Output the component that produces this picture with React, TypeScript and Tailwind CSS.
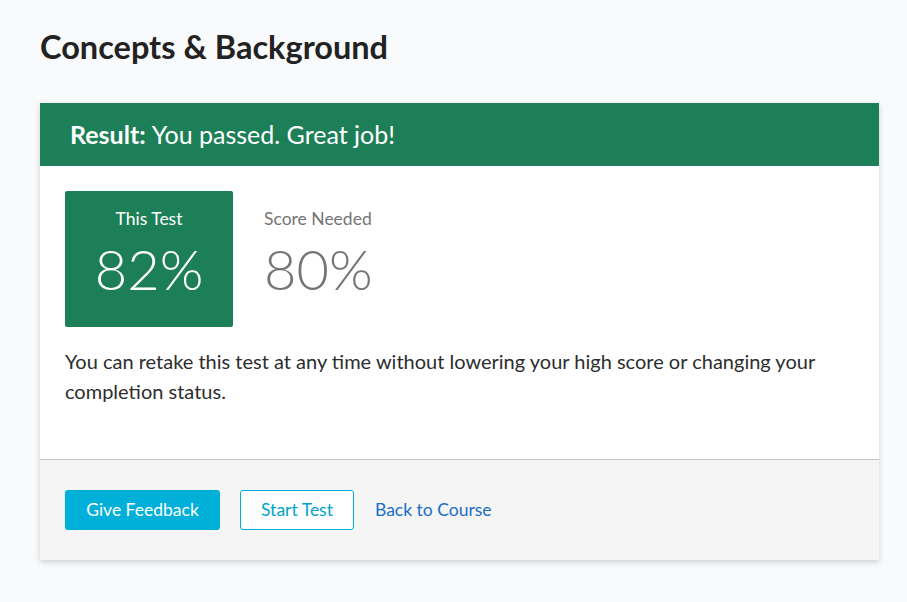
import React from 'react';

const App: React.FC = () => {
  return (
    <div className="min-h-screen w-full bg-[#f9fafc] px-10 pt-[26px] pb-10 font-['Lato','Noto_Sans',sans-serif] text-[#2d2d2d]">
      <h1 className="text-[32.5px] font-bold leading-[42px] text-[#222]">Concepts &amp; Background</h1>

      <div className="mt-[35px] w-[839px] bg-white shadow-[0_2px_6px_rgba(0,0,0,0.18)]">
        <div className="flex h-[63px] items-center bg-[#1d7f58] px-[30px] text-[25px] text-white">
          <span className="font-bold">Result:</span>
          <span className="ml-[6px]">You passed. Great job!</span>
        </div>

        <div className="px-[25px] pt-[25px] pb-[53px]">
          <div className="flex items-start">
            <div className="flex h-[136px] w-[168px] flex-col items-center rounded-[2px] bg-[#1d7f58] pt-[17px] text-white">
              <span className="text-[17.5px] leading-[22px]">This Test</span>
              <span className="mt-[8px] text-[56px] font-light leading-[62px]">82%</span>
            </div>
            <div className="ml-[31px] flex flex-col items-start pt-[17px] text-[#757575]">
              <span className="text-[17.5px] leading-[22px]">Score Needed</span>
              <span className="mt-[8px] text-[56px] font-light leading-[62px]">80%</span>
            </div>
          </div>
          <p className="mt-[19px] text-[20px] leading-[30px] text-[#2d2d2d]">
            You can retake this test at any time without lowering your high score or changing your completion status.
          </p>
        </div>

        <div className="flex h-[101px] items-center gap-5 border-t border-[#c4c4c4] bg-[#f5f5f5] px-[25px]">
          <button className="h-[40px] w-[155px] rounded-[3px] bg-[#00b0d9] text-[17.5px] text-white">Give Feedback</button>
          <button className="h-[40px] w-[114px] rounded-[3px] border border-[#00b0d9] bg-white text-[17.5px] text-[#00a4cc]">Start Test</button>
          <a className="ml-[1px] text-[17.5px] text-[#1a6fc4]" href="#">Back to Course</a>
        </div>
      </div>
    </div>
  );
};

export default App;
